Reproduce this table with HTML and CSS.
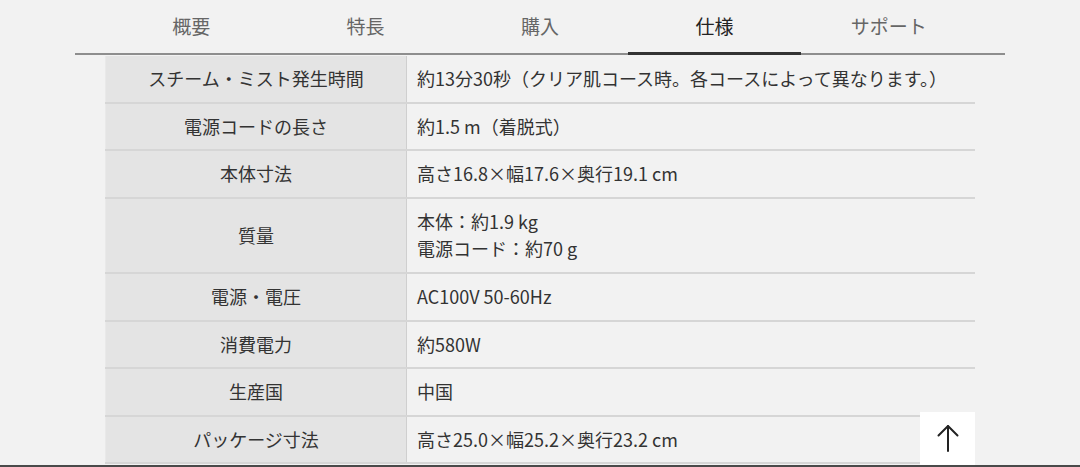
FILE: index.html
```html
<!DOCTYPE html>
<html lang="ja">
<head>
<meta charset="utf-8">
<title>仕様</title>
<link rel="stylesheet" href="styles.css">
</head>
<body>
<nav class="tabs">
  <div class="tabs-inner">
    <a class="tab">概要</a>
    <a class="tab">特長</a>
    <a class="tab">購入</a>
    <a class="tab active">仕様</a>
    <a class="tab">サポート</a>
  </div>
</nav>
<table class="spec">
  <tbody>
    <tr><th>スチーム・ミスト発生時間</th><td>約13分30秒（クリア肌コース時。各コースによって異なります。）</td></tr>
    <tr><th>電源コードの長さ</th><td>約1.5 m（着脱式）</td></tr>
    <tr><th>本体寸法</th><td>高さ16.8×幅17.6×奥行19.1 cm</td></tr>
    <tr class="tall"><th>質量</th><td>本体：約1.9 kg<br>電源コード：約70 g</td></tr>
    <tr><th>電源・電圧</th><td>AC100V 50-60Hz</td></tr>
    <tr><th>消費電力</th><td>約580W</td></tr>
    <tr><th>生産国</th><td>中国</td></tr>
    <tr><th>パッケージ寸法</th><td>高さ25.0×幅25.2×奥行23.2 cm</td></tr>
  </tbody>
</table>
<a class="to-top" aria-label="ページトップへ">
  <svg width="24" height="30" viewBox="0 0 24 30" fill="none" stroke="#222" stroke-width="2" stroke-linecap="round" stroke-linejoin="round">
    <path d="M12 2 V27"/>
    <path d="M2.5 11.5 L12 2 L21.5 11.5"/>
  </svg>
</a>
<div class="bottom-edge"></div>
</body>
</html>
```
FILE: styles.css
```css
html, body {
  margin: 0;
  padding: 0;
}
body {
  background: #f2f2f2;
  font-family: "Noto Sans CJK JP", "Noto Sans", sans-serif;
  color: #333;
}
.tabs {
  width: 930px;
  margin: 0 auto;
  border-bottom: 2px solid #8e8e8e;
}
.tabs-inner {
  display: flex;
  padding: 0 29px;
  height: 53px;
}
.tab {
  position: relative;
  flex: 1;
  display: flex;
  align-items: center;
  justify-content: center;
  font-size: 19px;
  color: #666;
  padding-bottom: 2px;
  box-sizing: border-box;
}
.tab.active {
  color: #222;
}
.tab.active::after {
  content: "";
  position: absolute;
  left: 1px;
  right: 1px;
  bottom: -2px;
  height: 3px;
  background: #333;
}
.spec {
  width: 870px;
  margin: 1px auto 0;
  border-collapse: collapse;
  font-size: 18px;
  line-height: 27px;
}
.spec th, .spec td {
  height: 27px;
  padding: 9.25px 11px;
  border-bottom: 2px solid #d6d6d6;
}
.spec th {
  width: 278px;
  background: #e4e4e4;
  font-weight: normal;
  text-align: center;
  color: #333;
  border-left: 1px solid #e9e9e9;
  border-right: 1px solid #cfcfcf;
}
.spec td {
  background: #f2f2f2;
  text-align: left;
  color: #333;
  padding-left: 10px;
}
.spec tr.tall th, .spec tr.tall td {
  height: 55px;
}
.to-top {
  position: fixed;
  right: 105px;
  bottom: 0;
  width: 55px;
  height: 55px;
  background: #fff;
  display: flex;
  align-items: center;
  justify-content: center;
}
.to-top svg {
  display: block;
  margin-top: -1px;
}
.bottom-edge {
  position: fixed;
  left: 0;
  right: 0;
  bottom: 0;
  height: 2px;
  background: #4a4a4a;
}
```
